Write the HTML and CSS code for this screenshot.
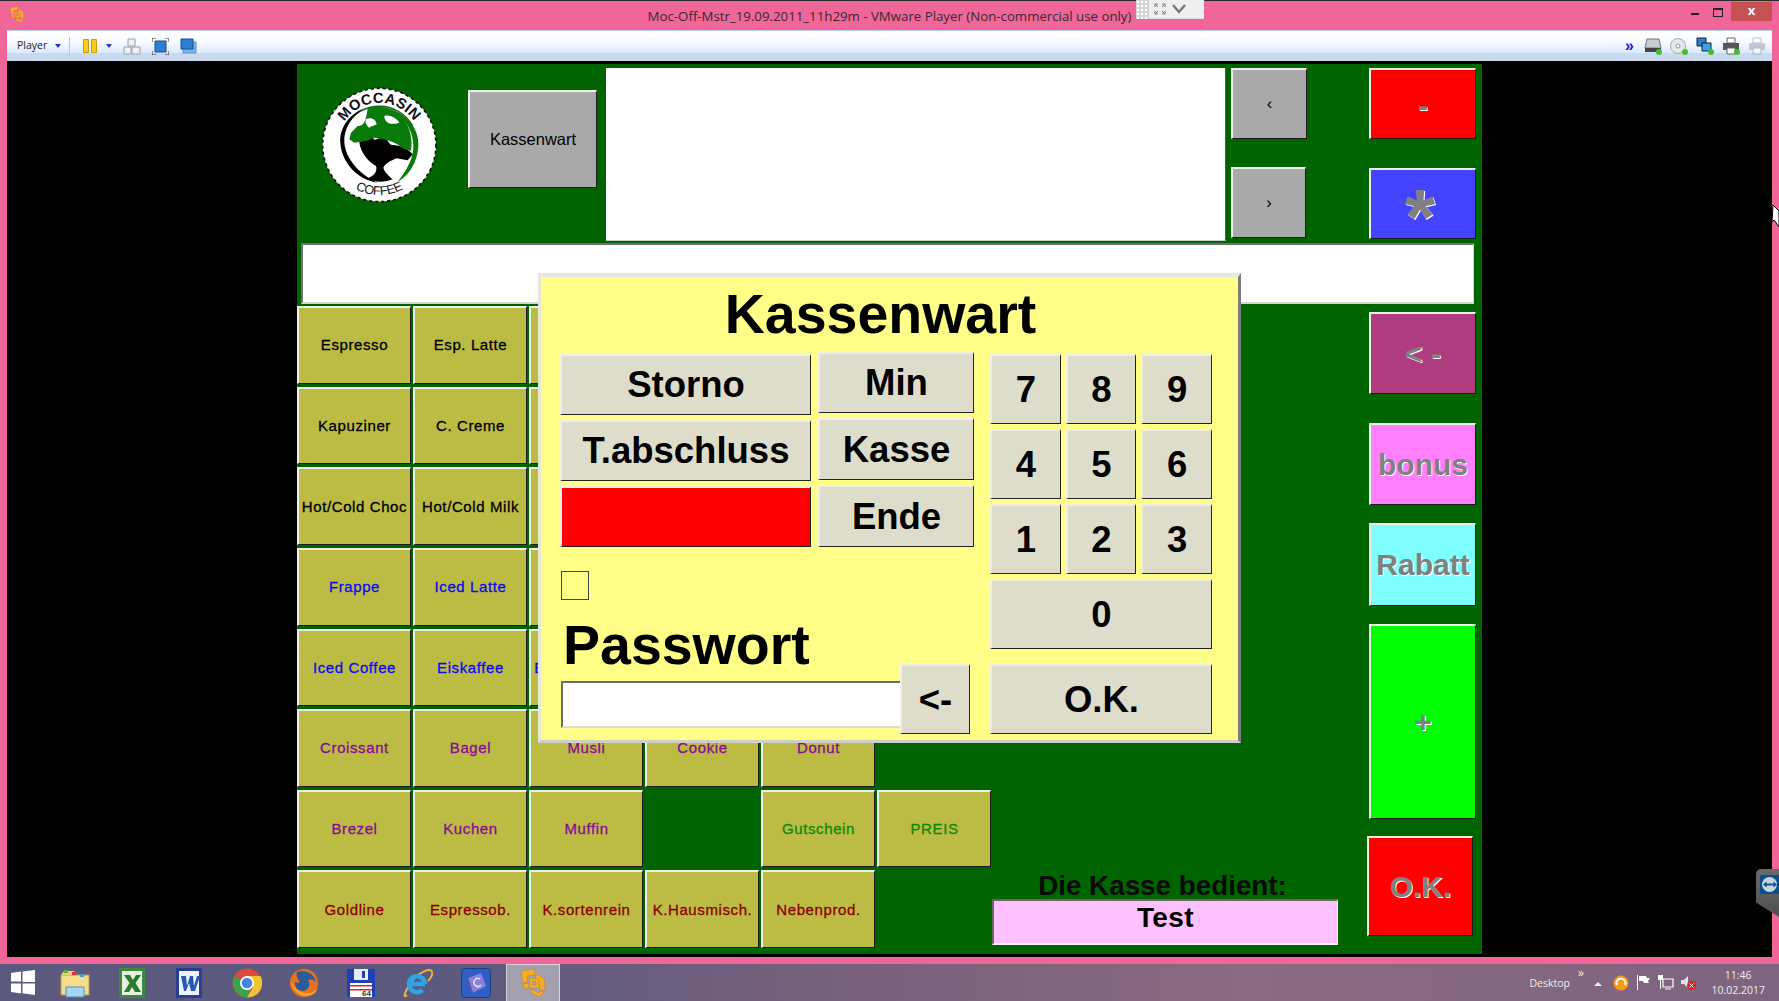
FILE: index.html
```html
<!DOCTYPE html>
<html lang="de">
<head>
    <meta charset="UTF-8">
    <meta name="viewport" content="width=device-width, initial-scale=1.0">
    <title>Moc-Off-Mstr - VMware Player</title>
    <link rel="stylesheet" href="styles.css">
</head>
<body>
    <svg class="defs" width="0" height="0">
        <symbol id="vmw" viewBox="0 0 26 30">
            <path d="M1 3L14 1l1 6-8 1 1 6-5 1zM16 6l8 4 1 12h-5l-1-9-4-2zM21 23l3 1-5 5-8-4v-4l8 4zM3 16l5-1 1 5-4 1z" fill="#f5ae2a" stroke="#c47d10" stroke-width=".5"/>
            <path fill-rule="evenodd" d="M9 10l10 1v9l-9 0zM12 13l.500 4H16v-3.500z" fill="#f5ae2a" stroke="#c47d10" stroke-width=".5"/>
        </symbol>
    </svg>

    <div class="window">
        <div class="titlebar">
            <svg class="title-icon" width="16" height="17"><use href="#vmw"/></svg>
            <span class="title-text">Moc-Off-Mstr_19.09.2011_11h29m - VMware Player (Non-commercial use only)</span>
            <div class="win-controls">
                <span class="win-min"></span>
                <span class="win-max"></span>
                <span class="win-close">x</span>
            </div>
            <div class="minibar">
                <span class="mini-grip"></span>
                <svg width="12" height="12" viewBox="0 0 12 12"><path d="M1 4V1h3M8 1h3v3M11 8v3H8M4 11H1V8M2 2l2 2M10 2L8 4M10 10L8 8M2 10l2-2" fill="none" stroke="#777"/></svg>
                <svg width="16" height="10" viewBox="0 0 16 10"><path d="M2 1l6 7 6-7" fill="none" stroke="#777" stroke-width="2.4"/></svg>
            </div>
        </div>

        <div class="toolbar">
            <span class="tb-label">Player</span>
            <span class="tb-caret"></span>
            <span class="tb-sep"></span>
            <svg class="tb-pause" width="14" height="14" viewBox="0 0 14 14"><path d="M.5 .5h5v13h-5zM8.500 .5h5v13h-5z" fill="#f8cc18" stroke="#c79a06"/></svg>
            <span class="tb-caret tb-caret2"></span>
            <svg class="tb-cad" width="18" height="17" viewBox="0 0 18 17"><path d="M5 1h7v7H5zM1 9h7v7H1zM9 9h8v7H9z" fill="#eef1f5" stroke="#9a9ea6"/></svg>
            <svg class="tb-full" width="17" height="17" viewBox="0 0 17 17"><path d="M3 3h11v11H3z" fill="#2f7fd0" stroke="#17508f"/><path d="M0 4V0h4M13 0h4v4M17 13v4h-4M4 17H0v-4" fill="none" stroke="#333"/></svg>
            <svg class="tb-unity" width="17" height="16" viewBox="0 0 17 16"><path d="M3 4h13v11H3z" fill="#7eb2e6" stroke="#5a8fc8"/><path d="M1 1h12v10H1z" fill="#2f7fd0" stroke="#17508f"/></svg>
            <div class="tb-right">
                <span class="tb-more">»</span>
                <svg width="18" height="18" viewBox="0 0 18 18"><path d="M3 2h12l2 9H1z" fill="#c7ced6" stroke="#777"/><path d="M1 11h16v4H1z" fill="#444"/><circle cx="15" cy="15" r="3" fill="#3fc22c"/></svg>
                <svg width="18" height="18" viewBox="0 0 18 18"><circle cx="8" cy="9" r="7.5" fill="#e4e8ea" stroke="#aaa"/><circle cx="8" cy="9" r="2" fill="#fff" stroke="#999"/><circle cx="15" cy="15" r="3" fill="#3fc22c"/></svg>
                <svg width="18" height="18" viewBox="0 0 18 18"><path d="M1 1h9v8H1z" fill="#2f7fd0" stroke="#123"/><path d="M6 6h9v8H6z" fill="#39a4e8" stroke="#123"/><circle cx="15" cy="15" r="3" fill="#3fc22c"/></svg>
                <svg width="18" height="18" viewBox="0 0 18 18"><path d="M5 1h8v5H5z" fill="#fff" stroke="#666"/><path d="M1 6h16v7H1z" fill="#555"/><path d="M5 11h8v6H5z" fill="#fff" stroke="#666"/><circle cx="15" cy="15" r="3" fill="#3fc22c"/></svg>
                <svg class="tb-off" width="18" height="18" viewBox="0 0 18 18"><path d="M5 1h8v5H5z" fill="#fff" stroke="#999"/><path d="M1 6h16v7H1z" fill="#aab"/><path d="M5 11h8v6H5z" fill="#fff" stroke="#999"/></svg>
            </div>
        </div>

        <div class="screen">
            <div class="app">
                <div class="top">
                    <div class="logo">
                        <svg width="115" height="116" viewBox="78 48 345 348">
                            <circle cx="250" cy="222" r="170" fill="#fff" stroke="#111" stroke-width="5" stroke-dasharray="9 9"/>
                            <path d="M150 164A115 115 0 0 1 350 164" fill="none" stroke="#0a6e0a" stroke-width="4"/>
                            <path d="M205 112C160 130 130 170 133 215c3 55 47 110 112 120-45-20-95-65-100-120-3-45 25-80 60-103z"/>
                            <path d="M280 112c55 18 90 63 87 113-2 45-27 90-62 107 30-37 47-72 47-107 0-45-27-90-72-113z" fill="#0a7a0a"/>
                            <path d="M190 215c10-15 25-25 40-17 5 17 15 2 32 0 18 7 13 27 33 24 20 3 40 10 55 28l-15 18-35-6c-15 8-30 13-38 28 3 15 23 30 28 35-25 10-55 10-75-3 20-7 30-22 25-37-25-15-45-40-50-70z"/>
                            <path d="M215 112c30-12 75-7 105 28 25 30 30 70 25 100l-25-8c-20-20-50-27-85-32l-25 10-35 5-15-10 5-20 20-20c20 0 25-15 30-53z" fill="#0a7a0a"/>
                            <path d="M210 145c15-8 30 0 32 15-10 5-15 5-22 10-8-5-14-15-10-25zM265 135c15-5 35 5 45 20-12 5-30 5-38-3-5-5-8-12-7-17z" fill="#fff"/>
                            <path id="arcTop" d="M145 152A126 126 0 0 1 355 152" fill="none"/>
                            <path id="arcBot" d="M178 354A150 150 0 0 0 322 354" fill="none"/>
                            <text class="logo-text"><textPath href="#arcTop" textLength="246">MOCCASIN</textPath></text>
                            <text class="logo-text logo-text-sm"><textPath href="#arcBot" textLength="150">COFFEE</textPath></text>
                        </svg>
                    </div>
                    <button class="btn btn-gray btn-kassenwart">Kassenwart</button>
                    <div class="display"></div>
                    <div class="nav">
                        <button class="btn btn-gray btn-prev">‹</button>
                        <button class="btn btn-gray btn-next">›</button>
                    </div>
                    <div class="actions">
                        <button class="btn btn-act btn-red">-</button>
                        <button class="btn btn-act btn-blue"><span class="star">*</span></button>
                    </div>
                </div>

                <div class="ticket"></div>

                <div class="bottom">
                    <div class="products">
                        <button class="btn cell">Espresso</button><button class="btn cell">Esp. Latte</button><button class="btn cell"></button><button class="btn cell"></button><button class="btn cell"></button><span></span>
                        <button class="btn cell">Kapuziner</button><button class="btn cell">C. Creme</button><button class="btn cell"></button><button class="btn cell"></button><button class="btn cell"></button><span></span>
                        <button class="btn cell">Hot/Cold Choc</button><button class="btn cell">Hot/Cold Milk</button><button class="btn cell"></button><button class="btn cell"></button><button class="btn cell"></button><span></span>
                        <button class="btn cell c-blue">Frappe</button><button class="btn cell c-blue">Iced Latte</button><button class="btn cell"></button><button class="btn cell"></button><button class="btn cell"></button><span></span>
                        <button class="btn cell c-blue">Iced Coffee</button><button class="btn cell c-blue">Eiskaffee</button><button class="btn cell c-blue">Eisschokolade</button><button class="btn cell"></button><button class="btn cell"></button><span></span>
                        <button class="btn cell c-purple">Croissant</button><button class="btn cell c-purple">Bagel</button><button class="btn cell c-purple">Musli</button><button class="btn cell c-purple">Cookie</button><button class="btn cell c-purple">Donut</button><span></span>
                        <button class="btn cell c-purple">Brezel</button><button class="btn cell c-purple">Kuchen</button><button class="btn cell c-purple">Muffin</button><span></span><button class="btn cell c-green">Gutschein</button><button class="btn cell c-green">PREIS</button>
                        <button class="btn cell c-red">Goldline</button><button class="btn cell c-red">Espressob.</button><button class="btn cell c-red">K.sortenrein</button><button class="btn cell c-red">K.Hausmisch.</button><button class="btn cell c-red">Nebenprod.</button><span></span>
                    </div>

                    <div class="cashier">
                        <div class="cashier-label">Die Kasse bedient:</div>
                        <div class="cashier-name">Test</div>
                    </div>

                    <div class="side">
                        <button class="btn btn-act btn-back">&lt; -</button>
                        <button class="btn btn-act btn-bonus">bonus</button>
                        <button class="btn btn-act btn-rabatt">Rabatt</button>
                        <button class="btn btn-act btn-plus">+</button>
                        <button class="btn btn-act btn-ok">O.K.</button>
                    </div>
                </div>

                <div class="dialog">
                    <div class="dlg-title">Kassenwart</div>
                    <div class="dlg-body">
                        <div class="dlg-left">
                            <div class="cmds">
                                <div class="cmd-col cmd-wide">
                                    <button class="btn dbtn">Storno</button>
                                    <button class="btn dbtn">T.abschluss</button>
                                    <button class="btn dbtn dbtn-red"></button>
                                </div>
                                <div class="cmd-col cmd-narrow">
                                    <button class="btn dbtn">Min</button>
                                    <button class="btn dbtn dbtn-tall">Kasse</button>
                                    <button class="btn dbtn dbtn-tall">Ende</button>
                                </div>
                            </div>
                            <div class="pw-row">
                                <div class="pw-field">
                                    <span class="check"></span>
                                    <div class="pw-label">Passwort</div>
                                    <div class="pw-input"></div>
                                </div>
                                <button class="btn dbtn btn-del">&lt;-</button>
                            </div>
                        </div>
                        <div class="keypad">
                            <button class="btn dbtn">7</button><button class="btn dbtn">8</button><button class="btn dbtn">9</button>
                            <button class="btn dbtn">4</button><button class="btn dbtn">5</button><button class="btn dbtn">6</button>
                            <button class="btn dbtn">1</button><button class="btn dbtn">2</button><button class="btn dbtn">3</button>
                            <button class="btn dbtn key-wide">0</button>
                            <button class="btn dbtn key-wide key-ok">O.K.</button>
                        </div>
                    </div>
                </div>
            </div>
        </div>

        <!-- fernwartung und mauszeiger liegen ueber dem bild -->
        <div class="tv-tab">
            <svg width="19" height="19" viewBox="0 0 19 19"><rect width="19" height="19" fill="#0e4f8a"/><circle cx="9.5" cy="9.5" r="7.5" fill="#c8d6e4"/><path d="M3 9.5l3.500-3v2h7v-2l3.500 3-3.500 3v-2h-7v2z" fill="#0e4f8a"/></svg>
        </div>
        <svg class="cursor" width="7" height="22" viewBox="0 0 7 22"><path d="M1 0l6 6v16L2 15 0 17z" fill="#fff" stroke="#000"/></svg>
    </div>

    <div class="taskbar">
        <svg class="tk-start" width="46" height="37" viewBox="0 0 46 37"><path d="M11 9l10-1.400v10H11zM22.500 7.400L35 6v12H22.500zM11 19.500h10v10l-10-1.400zM22.500 19.500H35V31l-12.500-1.700z" fill="#fff"/></svg>
        <span class="tk-item"><svg width="30" height="30" viewBox="0 0 30 30"><path d="M1 7h28v20H1z" fill="#f6dd8c" stroke="#b79a4a"/><path d="M1 7l3-4h10l2 4z" fill="#f2cf6a"/><path d="M4 2h4v3H4z" fill="#58b23c"/><path d="M12 4h4v3h-4z" fill="#d33"/><path d="M20 6h4v3h-4z" fill="#38a0e0"/><path d="M6 19h18v10H6z" fill="#a6d6f2" stroke="#4a90c0"/></svg></span>
        <span class="tk-item"><svg width="26" height="30" viewBox="0 0 26 30"><path d="M0 0h26v30H0z" fill="#3c8a3c"/><path d="M3 3h20v24H3z" fill="#e6efe2"/><path d="M5 7h6l3 5 3-5h5l-5.500 8L22 24h-6l-3-5-3 5H5l5.500-9z" fill="#2c7a2c"/></svg></span>
        <span class="tk-item"><svg width="26" height="30" viewBox="0 0 26 30"><path d="M0 0h26v30H0z" fill="#26408f"/><path d="M3 3h20v24H3z" fill="#eef2fb"/><path d="M5 8h5l1 10 3-10h3l1 10 3-10h3l-5 15h-4l-2-8-3 8H8z" fill="#2a58b0"/></svg></span>
        <span class="tk-item"><svg width="30" height="30" viewBox="0 0 30 30"><circle cx="15" cy="15" r="14.500" fill="#dd4a3c"/><path d="M15 15L2.500 8A14.500 14.500 0 0 0 15 29.500L22 15z" fill="#3aa34c"/><path d="M15 8h13.400A14.500 14.500 0 0 1 15 29.500l6-10z" fill="#f4c430"/><circle cx="15" cy="15" r="7" fill="#fff"/><circle cx="15" cy="15" r="5.300" fill="#4a82e6"/></svg></span>
        <span class="tk-item"><svg width="30" height="32" viewBox="0 0 30 32"><circle cx="15" cy="16" r="14" fill="#e8701e"/><path d="M8 5c8-3 17 1 19 10-3-3-6-3-8-2 3 4 1 10-5 11-5 0-9-4-8-9 2 1 3 1 5 0-3-3-4-7-3-10z" fill="#2c5c9e"/><path d="M2 14c1 9 8 15 15 15 6 0 10-3 12-8-3 4-8 6-13 5-7-1-11-6-14-12z" fill="#f5a623"/></svg></span>
        <span class="tk-item"><svg width="28" height="30" viewBox="0 0 28 30"><path d="M0 1h28v28H0z" fill="#1f3fb5"/><path d="M7 1h14v11H7z" fill="#e8ecf4"/><path d="M15 3h3v7h-3z" fill="#1f3fb5"/><path d="M3 15h22v14H3z" fill="#fff"/><path d="M3 17h22v1.500H3zM3 21h22v1.500H3z" fill="#d23"/><text class="floppy-text" x="15" y="28">64</text></svg></span>
        <span class="tk-item"><svg width="30" height="30" viewBox="0 0 30 30"><path d="M4 27C-1 32 2 22 10 12 17 4 28-1 29 4c1 3-2 7-4 9" fill="none" stroke="#f2b233" stroke-width="2"/><path d="M8 16h14M22 16a8 8 0 1 0-2.500 6" fill="none" stroke="#2ba5e8" stroke-width="4.500"/></svg></span>
        <span class="tk-item"><svg width="30" height="30" viewBox="0 0 30 30"><rect x=".5" y=".5" width="29" height="29" rx="4" fill="#2d5fc4" stroke="#1b3c86"/><path d="M7 10l13-5 5 13-13 7z" fill="#8b7fd8"/><path d="M7 10l5 15-4-2z" fill="#5a4fb0"/><path d="M19 11a4 4 0 1 0 1 6" fill="none" stroke="#dfe3ff" stroke-width="1.500"/></svg></span>
        <span class="tk-item tk-active"><svg width="26" height="30"><use href="#vmw"/></svg></span>

        <div class="tray">
            <span class="tray-desk">Desktop</span>
            <span class="tray-more">»</span>
            <span class="tray-up"></span>
            <svg width="16" height="16" viewBox="0 0 16 16"><circle cx="8" cy="8" r="7.500" fill="#f59a14"/><path d="M4 10a4.500 4.500 0 1 1 8 0" fill="none" stroke="#fff" stroke-width="2"/></svg>
            <svg width="15" height="15" viewBox="0 0 15 15"><path d="M1.500 0v15" stroke="#fff"/><path d="M3 1h7l1 2h3l-2 3 1 2H8L7 6H3z" fill="#fff"/></svg>
            <svg width="16" height="16" viewBox="0 0 16 16"><path d="M5 4h10v8H5zM7 14h6" fill="none" stroke="#fff" stroke-width="1.200"/><path d="M0 0h5v5H0z" fill="#fff"/><path d="M2.500 5v9" stroke="#fff"/></svg>
            <svg width="15" height="15" viewBox="0 0 15 15"><path d="M0 5h3l4-4v12l-4-4H0z" fill="#e4e4e4"/><circle cx="10.500" cy="10.500" r="4.500" fill="#e02020"/><path d="M8.500 8.500l4 4M12.500 8.500l-4 4" stroke="#fff"/></svg>
            <div class="tray-clock">
                <span>11:46</span>
                <span>10.02.2017</span>
            </div>
        </div>
    </div>
</body>
</html>
```

FILE: styles.css
```css
html, body {
    margin: 0;
    padding: 0;
}
body {
    width: 1779px;
    height: 1001px;
    overflow: hidden;
    font-family: "Liberation Sans", Arial, sans-serif;
    background: #000;
}
.defs {
    display: block;
    height: 0;
}

/* vmware fenster */
.window {
    position: relative;
    height: 964px;
    background: #f06698;
    box-sizing: border-box;
}
.titlebar {
    position: relative;
    display: grid;
    grid-template-columns: 1fr auto 1fr;
    align-items: center;
    height: 30px;
    box-sizing: border-box;
    border-top: 1px solid #2a2a2a;
    font-family: "Open Sans", sans-serif;
}
.title-icon {
    margin: -2px 0 0 9px;
}
.title-text {
    font-size: 13.250px;
    color: #3a2630;
    margin-top: 1px;
}
.win-controls {
    display: flex;
    justify-content: flex-end;
    align-items: flex-start;
    align-self: start;
    padding-right: 7px;
}
.win-min {
    width: 8px;
    height: 2px;
    background: #222;
    margin: 12px 14px 0 0;
}
.win-max {
    width: 8px;
    height: 6px;
    border: 1px solid #222;
    border-top-width: 2px;
    margin: 7px 8px 0 0;
}
.win-close {
    width: 41px;
    height: 19px;
    margin-top: 1px;
    background: #c75050;
    color: #fff;
    font-size: 13px;
    font-weight: bold;
    line-height: 17px;
    text-align: center;
}
.minibar {
    position: absolute;
    left: 1136px;
    top: -1px;
    display: flex;
    align-items: center;
    gap: 5px;
    width: 68px;
    height: 19px;
    box-sizing: border-box;
    background: #efefef;
    border-bottom: 1px solid #ddd;
}
.mini-grip {
    width: 13px;
    height: 19px;
    background-color: #d4d4d4;
    background-image: radial-gradient(#fff 1.200px, transparent 1.300px);
    background-size: 4px 4px;
}

.toolbar {
    display: flex;
    align-items: center;
    height: 31px;
    margin: 0 7px;
    padding: 0 6px 0 10px;
    background: linear-gradient(#ffffff 0, #f6f9ff 40%, #dcebff 70%, #dcebff 72%, #c9daef 73%, #c9daef 100%);
    border-top: 1px solid #b9cde8;
    box-sizing: border-box;
}
.tb-label {
    font-family: "Open Sans", sans-serif;
    font-size: 10.500px;
    color: #222;
    margin-top: -2px;
}
.tb-caret {
    width: 0;
    height: 0;
    border: 3.500px solid transparent;
    border-top: 4px solid #1c3fb0;
    border-bottom: 0;
    margin: 0 0 0 8px;
}
.tb-sep {
    width: 1px;
    height: 19px;
    background: #b4c6dc;
    margin: 0 13px 0 8px;
}
.tb-caret2 {
    margin-left: 9px;
}
.tb-cad {
    margin-left: 11px;
}
.tb-full {
    margin-left: 11px;
}
.tb-unity {
    margin-left: 11px;
}
.tb-right {
    display: flex;
    align-items: center;
    gap: 8px;
    margin-left: auto;
}
.tb-more {
    color: #1414e0;
    font-size: 16px;
    font-weight: bold;
    line-height: 16px;
    margin-right: 2px;
}
.tb-off {
    opacity: .6;
}

.screen {
    height: 896px;
    margin: 0 7px;
    padding: 3px 0 0 290px;
    box-sizing: border-box;
    background: #000;
}

/* kassen oberflaeche */
.app {
    position: relative;
    width: 1185px;
    height: 890px;
    background: #006400;
}
.btn {
    display: flex;
    align-items: center;
    justify-content: center;
    box-sizing: border-box;
    margin: 0;
    padding: 0;
    border-style: solid;
    border-width: 2px 1px 1px 2px;
    border-color: #f0f0ea #1c1c1c #1c1c1c #f0f0ea;
    font-family: "Liberation Sans", Arial, sans-serif;
    color: #000;
}
.top {
    display: flex;
    height: 179px;
    padding-top: 4px;
    box-sizing: border-box;
}
.logo {
    width: 171px;
    padding: 19px 0 0 25px;
    box-sizing: border-box;
}
.logo-text {
    font-family: "Liberation Sans", sans-serif;
    font-size: 44px;
    font-weight: bold;
    fill: #111;
}
.logo-text-sm {
    font-size: 38px;
    font-weight: normal;
}
.btn-gray {
    background: #a9a9a9;
    font-size: 16.500px;
}
.btn-kassenwart {
    width: 129px;
    height: 98px;
    margin-top: 22px;
}
.display {
    width: 620px;
    height: 173px;
    margin-left: 9px;
    background: #fff;
    border-right: 1px solid #555;
    border-bottom: 1px solid #ccc;
    box-sizing: border-box;
}
.nav {
    display: flex;
    flex-direction: column;
    width: 76px;
    margin-left: 5px;
}
.btn-prev {
    width: 76px;
    height: 71px;
    padding-bottom: 2px;
}
.btn-next {
    width: 75px;
    height: 71px;
    margin-top: 28px;
    padding-bottom: 2px;
}
.actions {
    display: flex;
    flex-direction: column;
    margin-left: 62px;
}
.btn-act {
    font-size: 30px;
    font-weight: bold;
    color: #808080;
    text-shadow: 1px 1px 0 #fff;
    width: 107px;
}
.btn-red {
    height: 71px;
    background: #f00;
    padding-top: 4px;
}
.btn-blue {
    height: 71px;
    margin-top: 29px;
    background: #4444ff;
}
.star {
    font-size: 78px;
    line-height: 1;
    margin: 26px 6px 0 0;
}

.ticket {
    width: 1173px;
    height: 61px;
    margin-left: 4px;
    background: #fff;
    box-sizing: border-box;
    border-top: 2px solid #707070;
    border-left: 2px solid #707070;
    border-right: 1px solid #d8d8c8;
    border-bottom: 2px solid #d8d8c8;
}

.bottom {
    display: flex;
    margin-top: 2px;
}
.products {
    display: grid;
    grid-template-columns: repeat(6, 114px);
    grid-template-rows: repeat(8, 1fr);
    gap: 3px 2px;
    width: 694px;
    height: 642px;
    flex: none;
}
.cell {
    padding-bottom: 1px;
    background: #bcbc44;
    font-size: 15px;
    letter-spacing: .6px;
    -webkit-text-stroke: .3px;
    white-space: nowrap;
    overflow: visible;
}
.c-blue {
    color: #0a0af0;
}
.c-purple {
    color: #880a96;
}
.c-green {
    color: #0a8a0a;
}
.c-red {
    color: #8c0000;
}

.cashier {
    display: flex;
    flex-direction: column;
    width: 346px;
    height: 642px;
    margin-left: 1px;
    justify-content: flex-end;
    padding-bottom: 3px;
    box-sizing: border-box;
    flex: none;
}
.cashier-label {
    margin-bottom: -2px;
    padding-right: 5px;
    font-size: 27.800px;
    font-weight: bold;
    line-height: 30px;
    text-align: center;
    color: #0a0a0a;
}
.cashier-name {
    height: 46px;
    box-sizing: border-box;
    background: #ffc0ff;
    border-style: solid;
    border-width: 2px 1px 2px 2px;
    border-color: #666 #f4f4f0 #f4f4f0 #666;
    font-size: 28px;
    font-weight: bold;
    letter-spacing: .4px;
    line-height: 33px;
    text-align: center;
}

.side {
    display: flex;
    flex-direction: column;
    margin-left: 31px;
    padding-top: 6px;
}
.btn-back {
    height: 82px;
    background: #b03c80;
}
.btn-bonus {
    height: 82px;
    margin-top: 29px;
    background: #ff80ff;
}
.btn-rabatt {
    height: 83px;
    margin-top: 18px;
    background: #80ffff;
}
.btn-plus {
    height: 195px;
    margin-top: 18px;
    background: #00ff00;
}
.btn-ok {
    width: 106px;
    height: 100px;
    margin: 17px 0 0 -2px;
    background: #f00;
}

/* dialog liegt ueber der kasse */
.dialog {
    position: absolute;
    left: 241px;
    top: 209px;
    width: 703px;
    height: 470px;
    box-sizing: border-box;
    background: #ffff88;
    border-style: solid;
    border-width: 4px 3px 3px 3px;
    border-color: #e6e6de #7c7c7c #cfcfc8 #e6e6de;
}
.dlg-title {
    height: 75px;
    padding-right: 18px;
    font-size: 55.500px;
    font-weight: bold;
    line-height: 75px;
    text-align: center;
}
.dlg-body {
    display: flex;
    padding-left: 19px;
}
.dlg-left {
    width: 414px;
}
.cmds {
    display: flex;
    gap: 7px;
}
.cmd-col {
    display: flex;
    flex-direction: column;
}
.cmd-wide {
    width: 251px;
    gap: 5px;
    padding-top: 2px;
}
.cmd-narrow {
    width: 156px;
    gap: 5px;
}
.dbtn {
    height: 61px;
    background: #deddcb;
    border-color: #efefe8 #222 #222 #efefe8;
    font-size: 36.500px;
    font-weight: bold;
}
.dbtn-tall {
    height: 62px;
}
.dbtn-red {
    background: #f00;
}
.pw-row {
    display: flex;
    align-items: flex-end;
    margin-top: 24px;
}
.pw-field {
    display: flex;
    flex-direction: column;
    width: 340px;
    padding-bottom: 6px;
}
.check {
    width: 28px;
    height: 29px;
    box-sizing: border-box;
    border: 1px solid #444;
    margin-left: 1px;
}
.pw-label {
    height: 81px;
    padding-left: 3px;
    font-size: 55.500px;
    font-weight: bold;
    line-height: 91px;
}
.pw-input {
    height: 47px;
    margin-left: 1px;
    box-sizing: border-box;
    background: #fff;
    border-top: 2px solid #6c6c6c;
    border-left: 2px solid #6c6c6c;
    border-bottom: 2px solid #dcdcd0;
}
.btn-del {
    width: 70px;
    height: 70px;
}
.keypad {
    display: grid;
    grid-template-columns: repeat(3, 1fr);
    grid-auto-rows: 70px;
    gap: 5px;
    width: 222px;
    margin-left: 16px;
    padding-top: 2px;
    align-self: flex-start;
}
.keypad .dbtn {
    height: 70px;
}
.key-wide {
    grid-column: span 3;
}
.keypad .key-ok {
    margin-top: 10px;
}

/* sachen ueber dem bild */
.tv-tab {
    position: absolute;
    left: 1756px;
    top: 869px;
    width: 23px;
    height: 48px;
    box-sizing: border-box;
    padding: 6px 0 0 4px;
    background: linear-gradient(#6a6a6a, #4e4e4e);
    border-radius: 5px 0 0 0;
    clip-path: polygon(0 0, 100% 0, 100% 100%, 0 70%);
}
.cursor {
    position: absolute;
    left: 1772px;
    top: 205px;
}

/* windows taskleiste */
.taskbar {
    display: flex;
    align-items: center;
    height: 37px;
    background: linear-gradient(90deg, #5b5a7e 0, #5b5a7e 25%, #75607c 45%, #8a6a80 70%, #7e6480 100%);
}
.tk-start {
    flex: none;
}
.tk-item {
    display: flex;
    align-items: center;
    justify-content: center;
    width: 57.300px;
    height: 37px;
    box-sizing: border-box;
    flex: none;
}
.tk-active {
    background: #a3a0b0;
    border: 1px solid #d6d6dc;
    border-bottom: 0;
    width: 54px;
    margin-left: 2px;
}
.floppy-text {
    font-size: 8px;
    font-weight: bold;
    fill: #333;
}
.tray {
    display: flex;
    align-items: center;
    margin-left: auto;
    height: 37px;
    padding-right: 14px;
    color: #eee;
    font-family: "Open Sans", sans-serif;
    font-size: 10.500px;
}
.tray svg {
    margin-left: 7px;
}
.tray-desk {
    margin-top: 1px;
}
.tray-more {
    font-size: 12px;
    margin: -20px 0 0 8px;
}
.tray-up {
    width: 0;
    height: 0;
    margin: 3px 4px 0 10.500px;
    border: 4px solid transparent;
    border-bottom: 4px solid #eee;
    border-top: 0;
}
.tray-clock {
    display: flex;
    flex-direction: column;
    align-items: center;
    margin-left: 15px;
    line-height: 15px;
}
```
